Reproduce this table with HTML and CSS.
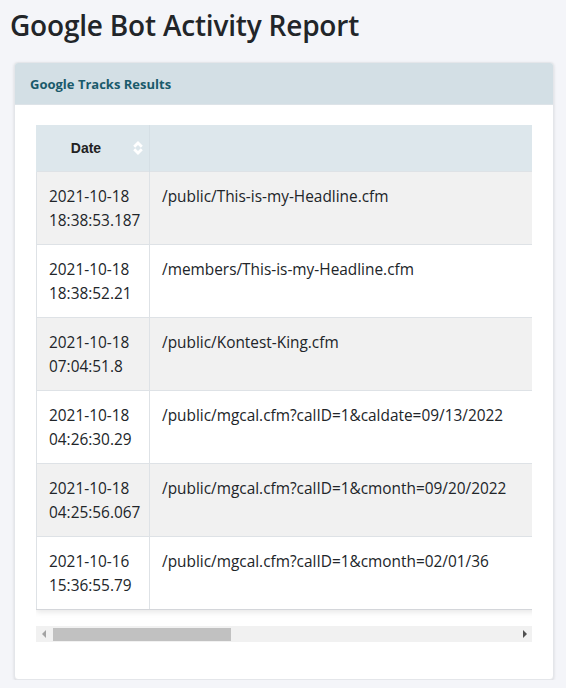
FILE: index.html
```html
<!DOCTYPE html>
<html>
<head>
<meta charset="utf-8">
<link rel="stylesheet" href="styles.css">
</head>
<body>
<h1 class="title">Google Bot Activity Report</h1>
<div class="card">
  <div class="card-header">Google Tracks Results</div>
  <div class="card-body">
    <div class="table-wrap">
      <table class="grid">
        <thead>
          <tr>
            <th class="col-date">Date
              <svg class="sort" width="10" height="16" viewBox="0 0 10 16"><path d="M1.2 6.8 L5 3 L8.8 6.8" fill="none" stroke="#fff" stroke-width="2.8"/><path d="M1.2 9.2 L5 13 L8.8 9.2" fill="none" stroke="#fff" stroke-width="2.8"/></svg>
            </th>
            <th class="col-url"></th>
          </tr>
        </thead>
        <tbody>
          <tr><td>2021-10-18<br>18:38:53.187</td><td>/public/This-is-my-Headline.cfm</td></tr>
          <tr><td>2021-10-18<br>18:38:52.21</td><td>/members/This-is-my-Headline.cfm</td></tr>
          <tr><td>2021-10-18<br>07:04:51.8</td><td>/public/Kontest-King.cfm</td></tr>
          <tr><td>2021-10-18<br>04:26:30.29</td><td>/public/mgcal.cfm?calID=1&amp;caldate=09/13/2022</td></tr>
          <tr><td>2021-10-18<br>04:25:56.067</td><td>/public/mgcal.cfm?calID=1&amp;cmonth=09/20/2022</td></tr>
          <tr><td>2021-10-16<br>15:36:55.79</td><td>/public/mgcal.cfm?calID=1&amp;cmonth=02/01/36</td></tr>
        </tbody>
      </table>
    </div>
    <div class="hscroll">
      <span class="arrow arrow-left"></span>
      <div class="track"><div class="thumb"></div></div>
      <span class="arrow arrow-right"></span>
    </div>
  </div>
</div>
</body>
</html>
```
FILE: styles.css
```css
html, body {
  margin: 0;
  padding: 0;
  background: #f4f5f9;
}
body {
  padding: 0 14px 0 14px;
  font-family: "Open Sans", "Noto Sans", sans-serif;
  color: #212529;
}
.title {
  margin: 0 0 0 -4px;
  padding-top: 5px;
  height: 48px;
  font-size: 28px;
  font-weight: 600;
  line-height: 40px;
  color: #222529;
  letter-spacing: -0.2px;
}
.card {
  margin-top: 9px;
  width: 538px;
  background: #fff;
  border-radius: 4px;
  border: 1px solid #e4e6ea;
  box-shadow: 0 1px 3px rgba(0,0,0,0.12);
  overflow: hidden;
}
.card-header {
  height: 41px;
  background: #d3dfe5;
  border-bottom: 1px solid #dde3e8;
  color: #1a5a6b;
  font-weight: 700;
  font-size: 13px;
  line-height: 42px;
  padding-left: 15px;
}
.card-body {
  padding: 20px 20px 37px 21px;
}
.table-wrap {
  width: 496px;
  overflow: hidden;
  padding-bottom: 16px;
}
.grid {
  width: 700px;
  table-layout: fixed;
  border-collapse: collapse;
  font-size: 15.4px;
  line-height: 24px;
  box-shadow: 0 2px 6px rgba(0,0,0,0.10);
}
.grid th {
  height: 46px;
  padding: 0;
  background: #dde7ec;
  font-family: "Liberation Sans", Arial, sans-serif;
  font-size: 14px;
  font-weight: 700;
  color: #222;
  text-align: center;
  border-left: 1px solid #d5dfe5;
  position: relative;
}
.grid th:first-child { border-left: 1px solid #dde7ec; }
.grid th.col-date { width: 113px; padding-right: 14px; box-sizing: border-box; }
.sort {
  position: absolute;
  right: 6px;
  top: 15px;
}
.grid td {
  padding: 13px 12px 11px 12px;
  vertical-align: top;
  border-top: 1px solid #dee2e6;
  border-left: 1px solid #dee2e6;
  white-space: nowrap;
}
.grid td:first-child { padding-left: 12px; padding-right: 2px; }
.grid tbody tr:nth-child(odd) td { background: #f1f1f1; }
.grid tbody tr:nth-child(even) td { background: #fff; }
.grid tbody tr:last-child td { border-bottom: 1px solid #d4d6da; }
.hscroll {
  display: flex;
  align-items: center;
  width: 496px;
  height: 16px;
  background: #f1f1f1;
}
.track {
  flex: 1;
  height: 100%;
  display: flex;
  align-items: center;
}
.thumb {
  margin-left: 2px;
  width: 178px;
  height: 13px;
  background: #c1c1c1;
}
.arrow {
  width: 15px;
  height: 16px;
  display: flex;
  align-items: center;
  justify-content: center;
}
.arrow::before {
  content: "";
  width: 0;
  height: 0;
  border-top: 4px solid transparent;
  border-bottom: 4px solid transparent;
}
.arrow-left::before { border-right: 4px solid #a3a3a3; }
.arrow-right::before { border-left: 4px solid #505050; }
```
